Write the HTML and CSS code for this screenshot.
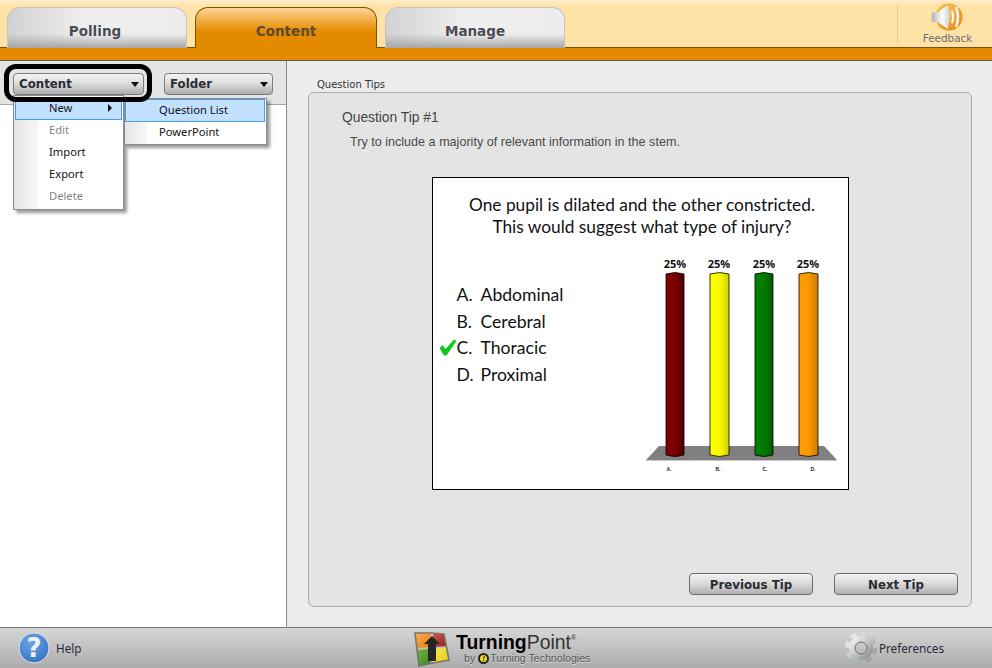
FILE: index.html
```html
<!doctype html>
<html>
<head>
<meta charset="utf-8">
<title>TurningPoint</title>
<link rel="stylesheet" href="styles.css">
</head>

<body>
<div class="app">
	<div class="header">
		<div class="tab">Polling</div>
		<div class="tab tab-on">Content</div>
		<div class="tab">Manage</div>
		<div class="feedback">
			<svg class="feedback-icon" width="32" height="30" viewBox="0 0 32 30">
				<defs>
					<radialGradient id="fbBall" cx="0.4" cy="0.3" r="0.8">
						<stop offset="0" stop-color="#ffc25e"/>
						<stop offset="1" stop-color="#e58a10"/>
					</radialGradient>
					<linearGradient id="fbCone" x1="0" y1="0" x2="1" y2="0">
						<stop offset="0" stop-color="#b0b0b0"/>
						<stop offset="0.6" stop-color="#fdfdfd"/>
						<stop offset="1" stop-color="#d0d0d0"/>
					</linearGradient>
				</defs>
				<circle cx="18" cy="14" r="13.500" fill="url(#fbBall)"/>
				<path d="M1 9.500 L7 9 L17 2 Q20 14 17 26 L7 19.500 L1 19 Q0 14 1 9.500Z" fill="url(#fbCone)"/>
				<path d="M21 8 Q23 14 21 20" fill="none" stroke="#fff" stroke-width="2"/>
				<path d="M25 4 Q29 14 25 24" fill="none" stroke="#f4f4f4" stroke-width="2.500"/>
			</svg>
			<span>Feedback</span>
		</div>
	</div>
	<div class="strip"></div>

	<div class="main">
		<div class="side">
			<div class="side-bar">
				<div class="drop drop-content"><span>Content</span><i class="arrow"></i></div>
				<div class="drop drop-folder"><span>Folder</span><i class="arrow"></i></div>
			</div>

			<ul class="menu">
				<li class="on">New<i class="more"></i></li>
				<li class="off">Edit</li>
				<li>Import</li>
				<li>Export</li>
				<li class="off">Delete</li>
			</ul>
			<ul class="menu submenu">
				<li class="on">Question List</li>
				<li>PowerPoint</li>
			</ul>

			<!-- callout round the Content button -->
			<div class="ring"></div>
		</div>

		<div class="content">
			<div class="panel-label">Question Tips</div>
			<div class="panel">
				<div class="tip-title">Question Tip #1</div>
				<div class="tip-text">Try to include a majority of relevant information in the stem.</div>

				<div class="slide">
					<div class="slide-title">One pupil is dilated and the other constricted.<br>This would suggest what type of injury?</div>
					<div class="slide-body">
						<ol class="answers">
							<li><b>A.</b>Abdominal</li>
							<li><b>B.</b>Cerebral</li>
							<li>
								<svg class="check" width="18" height="17" viewBox="0 0 18 17"><path d="M0.500 9 L3.500 6 L6.500 10 L15 0.500 L17.500 2 L7.500 16.500 L5 16.500Z" fill="#12c81e"/></svg>
								<b>C.</b>Thoracic
							</li>
							<li><b>D.</b>Proximal</li>
						</ol>
						<svg class="chart" width="205" height="225" viewBox="0 0 205 225">
							<defs>
								<linearGradient id="barA"><stop offset="0" stop-color="#800000"/><stop offset="0.5" stop-color="#7c0000"/><stop offset="1" stop-color="#4c0000"/></linearGradient>
								<linearGradient id="barB"><stop offset="0" stop-color="#ffff00"/><stop offset="0.5" stop-color="#fbfb00"/><stop offset="1" stop-color="#d0d000"/></linearGradient>
								<linearGradient id="barC"><stop offset="0" stop-color="#008000"/><stop offset="0.5" stop-color="#007c00"/><stop offset="1" stop-color="#005a00"/></linearGradient>
								<linearGradient id="barD"><stop offset="0" stop-color="#ff9d00"/><stop offset="0.5" stop-color="#fb9900"/><stop offset="1" stop-color="#cc7a00"/></linearGradient>
							</defs>
							<polygon points="19,191 184,191 197,205 6,205" fill="#808080"/>
							<rect x="6" y="205" width="191" height="1" fill="#c8c8c8"/>
							<g class="chart-bars">
								<path d="M26 19 Q35 16 44 19 V200 Q35 203 26 200Z" fill="url(#barA)"/>
								<path d="M70 19 Q79.500 16 89 19 V200 Q79.500 203 70 200Z" fill="url(#barB)"/>
								<path d="M115 19 Q124 16 133 19 V200 Q124 203 115 200Z" fill="url(#barC)"/>
								<path d="M159 19 Q168.500 16 178 19 V200 Q168.500 203 159 200Z" fill="url(#barD)"/>
							</g>
							<g class="chart-pct">
								<text x="35" y="13">25%</text>
								<text x="79" y="13">25%</text>
								<text x="124" y="13">25%</text>
								<text x="168" y="13">25%</text>
							</g>
							<g class="chart-key">
								<text x="29" y="216">A.</text>
								<text x="78" y="216">B.</text>
								<text x="125" y="216">C.</text>
								<text x="173" y="216">D.</text>
							</g>
						</svg>
					</div>
				</div>

				<div class="tip-btns">
					<div class="btn">Previous Tip</div>
					<div class="btn">Next Tip</div>
				</div>
			</div>
		</div>
	</div>

	<div class="footer">
		<div class="help">
			<svg width="32" height="32" viewBox="0 0 32 32">
				<defs>
					<radialGradient id="helpBall" cx="0.4" cy="0.3" r="0.8">
						<stop offset="0" stop-color="#6ea6e6"/>
						<stop offset="1" stop-color="#2f6fc0"/>
					</radialGradient>
				</defs>
				<circle cx="16" cy="16" r="15" fill="url(#helpBall)" stroke="#dfe6ee" stroke-width="1"/>
				<text class="help-mark" x="16" y="25">?</text>
			</svg>
			<span>Help</span>
		</div>

		<div class="brand">
			<svg class="brand-mark" width="36" height="36" viewBox="0 0 36 36">
				<defs>
					<linearGradient id="paneA" x1="0" y1="0" x2="1" y2="1"><stop offset="0" stop-color="#f8b060"/><stop offset="1" stop-color="#ee7a08"/></linearGradient>
					<linearGradient id="paneB" x1="0" y1="0" x2="1" y2="1"><stop offset="0" stop-color="#c85a50"/><stop offset="1" stop-color="#98201a"/></linearGradient>
					<linearGradient id="paneC" x1="0" y1="0" x2="1" y2="1"><stop offset="0" stop-color="#74b044"/><stop offset="1" stop-color="#3a8a1c"/></linearGradient>
					<linearGradient id="paneD" x1="0" y1="0" x2="1" y2="1"><stop offset="0" stop-color="#f8ec50"/><stop offset="1" stop-color="#e8c810"/></linearGradient>
				</defs>
				<path d="M1 2 L17 2 L17 16 L3 17Z" fill="url(#paneA)"/>
				<path d="M19 2 L30 3 L33 15 L19 16Z" fill="url(#paneB)"/>
				<path d="M3 19 L17 18 L17 32 L5 35Z" fill="url(#paneC)"/>
				<path d="M19 18 L33 17 L35 29 L19 32Z" fill="url(#paneD)"/>
				<path d="M1 2 L17 2 L30 3 L35 29 L19 32 L5 35Z" fill="none" stroke="#77776a" stroke-width="1.600"/>
				<path d="M18 5 L26 13 L22 13 L22 30 L14 30 L14 13 L10 13Z" fill="#262626"/>
			</svg>
			<div>
				<div class="brand-name"><b>Turning</b>Point<sup>®</sup></div>
				<div class="brand-by">by <i class="brand-dot">!</i>Turning Technologies</div>
			</div>
		</div>

		<div class="prefs">
			<svg width="34" height="34" viewBox="0 0 34 34">
				<defs>
					<linearGradient id="gearFill" x1="0" y1="0" x2="1" y2="1">
						<stop offset="0" stop-color="#f2f4f4"/>
						<stop offset="1" stop-color="#8e9494"/>
					</linearGradient>
				</defs>
				<circle cx="17" cy="17" r="13.500" fill="none" stroke="url(#gearFill)" stroke-width="5" stroke-dasharray="6 4.600"/>
				<circle cx="17" cy="17" r="9" fill="none" stroke="url(#gearFill)" stroke-width="6"/>
				<circle cx="17" cy="17" r="6" fill="none" stroke="#6e7474" stroke-width="1"/>
			</svg>
			<span>Preferences</span>
		</div>
	</div>
</div>
</body>
</html>
```

FILE: styles.css
```css
*{margin:0;padding:0;list-style:none;box-sizing:border-box;}
body{width:992px;height:668px;overflow:hidden;font-family:"DejaVu Sans",sans-serif;}
.app{display:flex;flex-direction:column;width:992px;height:668px;background:#ececec;}

/* top */
.header{display:flex;height:48px;padding:7px 0 0 7px;gap:8px;background:linear-gradient(#fdeecb,#fee2a6 6px);border-bottom:1px solid #6e5220;}
.tab{width:180px;height:41px;border:1px solid #c4c4c4;border-bottom:0;border-radius:13px 13px 0 0;background:linear-gradient(rgba(150,150,150,0) 65%,#a6a6a6),linear-gradient(90deg,#d2d2d2,#efefef 45%,#ececec);font-weight:bold;font-size:13.500px;line-height:46px;text-align:center;color:#4b4b52;}
.tab:first-child{padding-right:4px;}
.tab-on{width:182px;height:41px;border-color:#7a5200;background:linear-gradient(#fcd49a,#f0a838 35%,#e48a00 60%);position:relative;z-index:1;color:#5e4a2a;}
.feedback{display:flex;flex-direction:column;align-items:center;width:95px;height:38px;margin:-2px 0 0 auto;padding-left:5px;border-left:1px solid #f0ca88;font-size:10.400px;color:#6a6e78;}
.feedback-icon{margin:-2px 0 0 -1px;flex:none;}
.feedback span{margin-top:-1px;line-height:12px;}
.strip{height:13px;background:#e48a00;border-bottom:1px solid #5c5c5c;}

.main{flex:1;display:flex;min-height:0;}

/* left */
.side{position:relative;width:287px;background:#fff;border-right:1px solid #8a8a8a;}
.side-bar{display:flex;gap:20px;height:44px;padding:12px 0 0 13px;background:#e4e4e4;border-bottom:1px solid #a6a6a6;}
.drop{display:flex;align-items:center;justify-content:space-between;height:22px;padding:0 4px 0 5px;border:1px solid #7c7c7c;border-radius:4px;background:linear-gradient(#f4f4f4,#dedede 45%,#aeaeae);font-weight:bold;font-size:11.800px;color:#2c2c34;}
.drop-content{width:131px;}
.drop-folder{width:109px;}
.arrow{width:0;height:0;border:4.500px solid transparent;border-top:5px solid #111;border-bottom:0;}
.ring{position:absolute;left:4px;top:3px;width:148px;height:38px;border:5px solid #000;border-radius:12px;}

.menu{position:absolute;left:13px;top:34px;width:111px;height:115px;padding:1px;background:linear-gradient(90deg,#e6e6e6,#f7f7f7 24px,#fff 25px);border:1px solid #8c8c8c;box-shadow:3px 3px 3px rgba(0,0,0,.4);font-family:"Noto Sans",sans-serif;font-size:11.200px;color:#111;}
.menu li{position:relative;height:22px;line-height:22px;padding-left:34px;}
.menu li.on{height:23px;line-height:20px;background:#c2e0ff;border:1px solid #4a9ce8;padding-left:33px;margin-bottom:-1px;}
.menu li.off{color:#85838a;}
.more{position:absolute;right:9px;top:6px;width:0;height:0;border:4px solid transparent;border-left:4px solid #111;border-right:0;}
.submenu{left:124px;top:37px;width:143px;height:47px;padding-left:0;background:linear-gradient(90deg,#e6e6e6,#f7f7f7 22px,#fff 23px);}
.submenu li{padding-left:34px;}
.submenu li.on{padding-left:33px;width:140px;margin-top:-1px;}

/* right */
.content{flex:1;display:flex;flex-direction:column;padding:17px 20px 20px 21px;min-width:0;}
.panel-label{height:14px;margin-left:9px;font-size:10px;line-height:14px;color:#333;}
.panel{flex:1;display:flex;flex-direction:column;background:#e4e4e4;border:1px solid #aaa;border-radius:6px;}
.tip-title{margin:16px 0 0 33px;font-family:"Liberation Sans",sans-serif;font-size:13.800px;line-height:17px;color:#444;}
.tip-text{margin:9px 0 0 41px;font-family:"Liberation Sans",sans-serif;font-size:12.600px;line-height:15px;color:#4a4a4a;}
.slide{align-self:center;width:417px;height:313px;margin-top:27px;padding-top:16px;background:#fff;border:1px solid #000;font-family:Lato,sans-serif;color:#111;}
.slide-title{padding-left:4px;font-size:17.300px;line-height:22px;text-align:center;}
.slide-body{display:flex;justify-content:space-between;margin-top:17px;padding:0 3px 0 24px;}
.answers{padding-top:27px;font-size:17.600px;line-height:26.600px;}
.answers li{position:relative;}
.answers b{display:inline-block;width:24px;font-weight:normal;}
.check{position:absolute;left:-18px;top:4px;}
.chart-bars path{stroke:#000;stroke-width:.8;stroke-linejoin:round;}
.chart-pct text{font-family:"Open Sans",sans-serif;font-size:11px;font-weight:bold;text-anchor:middle;fill:#111;}
.chart-key text{font-family:"Liberation Sans",sans-serif;font-size:5px;font-weight:bold;text-anchor:middle;fill:#222;}
.tip-btns{display:flex;justify-content:flex-end;gap:21px;margin-top:auto;padding:0 13px 11px 0;}
.btn{width:124px;height:22px;border:1px solid #6e6e6e;border-radius:4px;background:linear-gradient(#f2f2f2,#dcdcdc 45%,#b0b0b0);font-weight:bold;font-size:11.800px;line-height:22px;text-align:center;color:#2a2a32;}

/* bottom */
.footer{position:relative;display:flex;align-items:center;justify-content:space-between;height:41px;padding:0 48px 0 18px;background:linear-gradient(#d6d6d6,#acacac);border-top:1px solid #777;font-family:"Noto Sans",sans-serif;font-size:11.700px;color:#2a2a38;}
.help,.prefs{display:flex;align-items:center;}
.help span{margin-left:6px;}
.prefs span{margin-left:1px;}
.help-mark{font-family:"DejaVu Sans",sans-serif;font-size:26px;font-weight:bold;text-anchor:middle;fill:#f0f0f0;}
.brand{position:absolute;left:414px;top:3px;display:flex;gap:6px;}
.brand-name{font-family:"Liberation Sans",sans-serif;font-size:19.400px;line-height:22px;color:#333;}
.brand-name b{color:#000;}
.brand-name sup{font-size:7px;vertical-align:9px;line-height:0;}
.brand-by{display:flex;align-items:center;margin:-1px 0 0 8px;font-family:"Liberation Sans",sans-serif;font-size:10.600px;line-height:13px;color:#555;text-shadow:0 1px 0 #ddd;}
.brand-dot{display:inline-block;width:11px;height:11px;margin:0 1px 0 3px;background:#f2dc20;border:2px solid #222;border-radius:50%;font-size:7px;font-weight:bold;line-height:7px;text-align:center;color:#111;text-shadow:none;}
```
